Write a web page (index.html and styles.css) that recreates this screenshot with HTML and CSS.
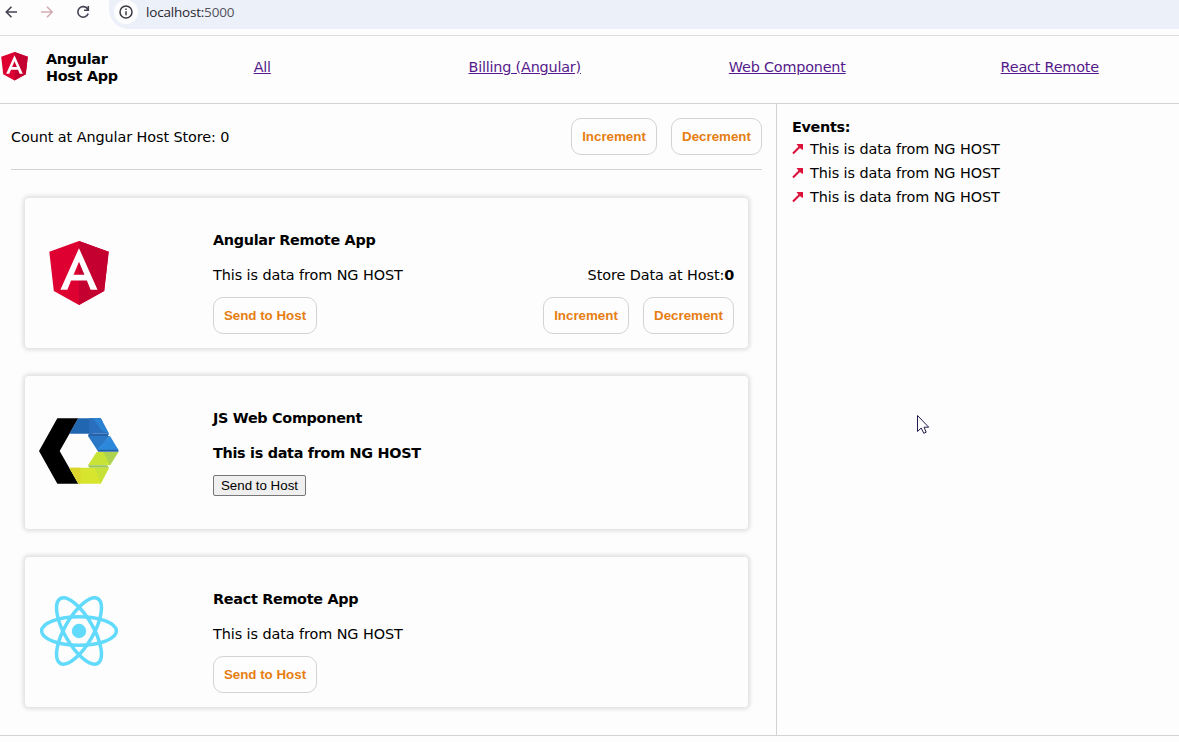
FILE: index.html
```
<!DOCTYPE html>
<html lang="en">
<head>
<meta charset="utf-8">
<title>Angular Host App</title>
<link rel="stylesheet" href="styles.css">
</head>
<body>
<svg width="0" height="0" class="defs">
  <symbol id="angular" viewBox="31 30 188 203">
    <path fill="#dd0031" d="M125 30 31.900 63.200 46.100 186.300 125 230 203.900 186.300 218.100 63.200Z"/>
    <path fill="#c3002f" d="M125 30V230L203.900 186.300 218.100 63.200Z"/>
    <path fill="#fff" d="M125 52.100 66.800 182.600H88.500L100.200 153.400H149.600L161.300 182.600H183ZM142 135.400H108L125 94.500Z"/>
  </symbol>
  <symbol id="arrow" viewBox="0 0 12 12">
    <path d="M1 10.500 9 2.500" stroke="#dc143c" stroke-width="2.100"/>
    <path d="M4.500 1H11V7L9 6 6 3Z" fill="#dc143c"/>
  </symbol>
</svg>
<header class="browser">
  <svg class="controls" width="100" height="35" viewBox="0 0 100 35" fill="none" stroke-width="1.6">
    <path stroke="#474253" d="M17 12H6.500M11.500 6.800 6.300 12l5.200 5.200"/>
    <path stroke="#d3adb4" d="M41 12H52M47 6.800 52.200 12 47 17.200"/>
    <path stroke="#474253" d="M87.600 9A5.300 5.300 0 1 0 88.200 13.500M88.300 6V10.200H84"/>
  </svg>
  <div class="address">
    <span class="info"><svg width="14" height="14" viewBox="0 0 14 14"><circle cx="7" cy="7" r="6" fill="none" stroke="#3c3840" stroke-width="1.500"/><path d="M7 6.200V10.200M7 3.600V5.100" stroke="#3c3840" stroke-width="1.500"/></svg></span>
    <span class="url">localhost:<span class="port">5000</span></span>
  </div>
</header>
<nav class="nav">
  <div class="brand"><svg class="brand-logo"><use href="#angular"/></svg><b>Angular<br>Host App</b></div>
  <a href="#">All</a><a href="#">Billing (Angular)</a><a href="#">Web Component</a><a href="#">React Remote</a>
</nav>
<main class="main">
  <section class="host">
    <div class="counter">
      <span class="count">Count at Angular Host Store: 0</span>
      <div class="buttons"><button class="btn inc">Increment</button><button class="btn dec">Decrement</button></div>
    </div>
    <div class="cards">
      <article class="card">
        <div class="logo ng"><svg class="angular-logo"><use href="#angular"/></svg></div>
        <div class="body">
          <h2>Angular Remote App</h2>
          <div class="row"><p>This is data from NG HOST</p><p>Store Data at Host:<b>0</b></p></div>
          <div class="row"><button class="btn send">Send to Host</button><div class="buttons"><button class="btn inc">Increment</button><button class="btn dec">Decrement</button></div></div>
        </div>
      </article>
      <article class="card wc">
        <div class="logo">
          <svg width="80" height="66" viewBox="57 144 240 198">
            <path d="M112 145H175L119 243 175 341H112L57 243Z"/>
            <path fill="#2166b1" d="M175 145H242L249 157 216 191H148Z"/>
            <path fill="#2a6fbd" d="M208 145H242L267 191H208Z"/>
            <path fill="#2b82d3" d="M219 145H242L267 191 244 180Z"/>
            <path fill="#2763ac" d="M206 191H267L264 198H204Z"/>
            <path fill="#2977c5" d="M204 198H270L232 241Z"/>
            <path fill="#2b88da" d="M270 198 296 241H234L231 239Z"/>
            <path fill="#2461a7" d="M231 239H294L296 245H235Z"/>
            <path fill="#c8e336" d="M230 246H295L270 286H204Z"/>
            <path fill="#add34f" d="M250 246H295L270 286Z"/>
            <path fill="#99c563" d="M204 286H261L267 293H208Z"/>
            <path fill="#d7e52f" d="M148 293H267L242 341H175Z"/>
            <path fill="#dcd42c" d="M148 293H181V341H175Z"/>
            <path fill="#c8e136" d="M224 293H267L242 341Z"/>
          </svg>
        </div>
        <div class="body">
          <h2>JS Web Component</h2>
          <div class="row"><p><b>This is data from NG HOST</b></p></div>
          <button class="plain">Send to Host</button>
        </div>
      </article>
      <article class="card">
        <div class="logo react">
          <svg width="80" height="72" viewBox="-40 -36 80 72" fill="none" stroke="#61dafb" stroke-width="3.500">
            <circle r="7.200" fill="#61dafb" stroke="none"/>
            <ellipse rx="37.400" ry="14.300"/><ellipse rx="37.400" ry="14.300" transform="rotate(60)"/><ellipse rx="37.400" ry="14.300" transform="rotate(120)"/>
          </svg>
        </div>
        <div class="body">
          <h2>React Remote App</h2>
          <div class="row"><p>This is data from NG HOST</p></div>
          <div class="row"><button class="btn send">Send to Host</button></div>
        </div>
      </article>
    </div>
  </section>
  <aside class="events">
    <b>Events:</b>
    <ul>
      <li><svg class="arrow"><use href="#arrow"/></svg><span>This is data from NG HOST</span></li>
      <li><svg class="arrow"><use href="#arrow"/></svg><span>This is data from NG HOST</span></li>
      <li><svg class="arrow"><use href="#arrow"/></svg><span>This is data from NG HOST</span></li>
    </ul>
  </aside>
</main>
<svg class="cursor" width="13" height="21" viewBox="0 0 13 21"><path d="M.5.500V16.500L4.200 13 6.800 18.300 9.200 17.200 7 12.200H11.700Z" fill="#fff" stroke="#241b4e"/></svg>
</body>
</html>
```
FILE: styles.css
```
* { box-sizing: border-box; }
body { margin: 0; height: 742px; overflow: hidden; background: #fdfdfd; color: #000; font: 14.4px/17px Verdana, "DejaVu Sans", sans-serif; letter-spacing: -0.08px; }
b, h2 { letter-spacing: -0.3px; }
.defs { position: absolute; }
.browser { display: flex; height: 36px; border-bottom: 1px solid #dcdcdc; }
.controls { flex: none; margin-right: 9px; }
.address { flex: 1; height: 29px; padding-left: 5px; display: flex; background: #ecf0f9; border-radius: 0 0 0 20px; }
.info { width: 24px; height: 24px; border-radius: 50%; background: #fdfdfd; display: grid; place-items: center; }
.url { margin-left: 8px; font: 13.5px/24px "Open Sans", sans-serif; letter-spacing: -0.2px; color: #29252e; }
.port { color: #55515c; }
.nav { display: grid; grid-template-columns: 131px repeat(4, 262.5px); align-items: center; height: 68px; border-bottom: 1px solid #d3d3d3; text-align: center; overflow: hidden; }
.nav a { color: #551a8b; padding-bottom: 4px; letter-spacing: -0.2px; }
.brand { display: flex; align-items: center; text-align: left; padding-bottom: 4px; }
.brand-logo { width: 27px; height: 29px; margin: 0 18px 2px 1px; }
.main { display: grid; grid-template-columns: 777px 1fr; height: 632px; border-bottom: 1px solid #d3d3d3; }
.host { border-right: 1px solid #d3d3d3; padding: 0 14px 0 11px; }
.counter { height: 66px; display: flex; align-items: center; justify-content: space-between; border-bottom: 1px solid #d3d3d3; }
.count { padding-top: 2px; }
.buttons { display: flex; gap: 14px; }
.btn { height: 37px; padding: 0; background: #fdfdfd; border: 1px solid #d3d3d3; border-radius: 10px; color: #e67e13; font: bold 13.33px "Liberation Sans", sans-serif; letter-spacing: 0; }
.inc { width: 86px; }
.dec { width: 91px; }
.send { width: 104px; }
.cards { padding: 28px 14px 0; display: grid; gap: 28px; }
.card { height: 150px; display: grid; grid-template-columns: 80px 1fr; column-gap: 94px; padding: 0 14px; border-radius: 4px; box-shadow: 0 0 4px 2px #dedede; }
.wc { height: 153px; }
.logo { display: grid; place-items: center; }
.ng { padding-top: 1px; }
.wc .logo { padding-bottom: 4px; }
.react { padding-bottom: 2px; }
.angular-logo { width: 60px; height: 65px; }
.body { padding-top: 34px; }
h2 { margin: 0 0 18px; font: inherit; font-weight: bold; }
.row { display: flex; justify-content: space-between; }
p { margin: 0 0 13px; }
.plain { display: block; width: 93px; height: 21px; padding: 0; border: 1px solid #767676; border-radius: 2px; background: #efefef; color: #000; font: 13.33px "Liberation Sans", sans-serif; letter-spacing: 0; }
.events { padding: 15px 14px 0 15px; }
ul { list-style: none; margin: 1px 0 0; padding: 0; }
li { display: flex; align-items: center; height: 24px; gap: 6px; }
.arrow { width: 12px; height: 12px; }
.cursor { position: absolute; left: 917px; top: 415px; }
```
